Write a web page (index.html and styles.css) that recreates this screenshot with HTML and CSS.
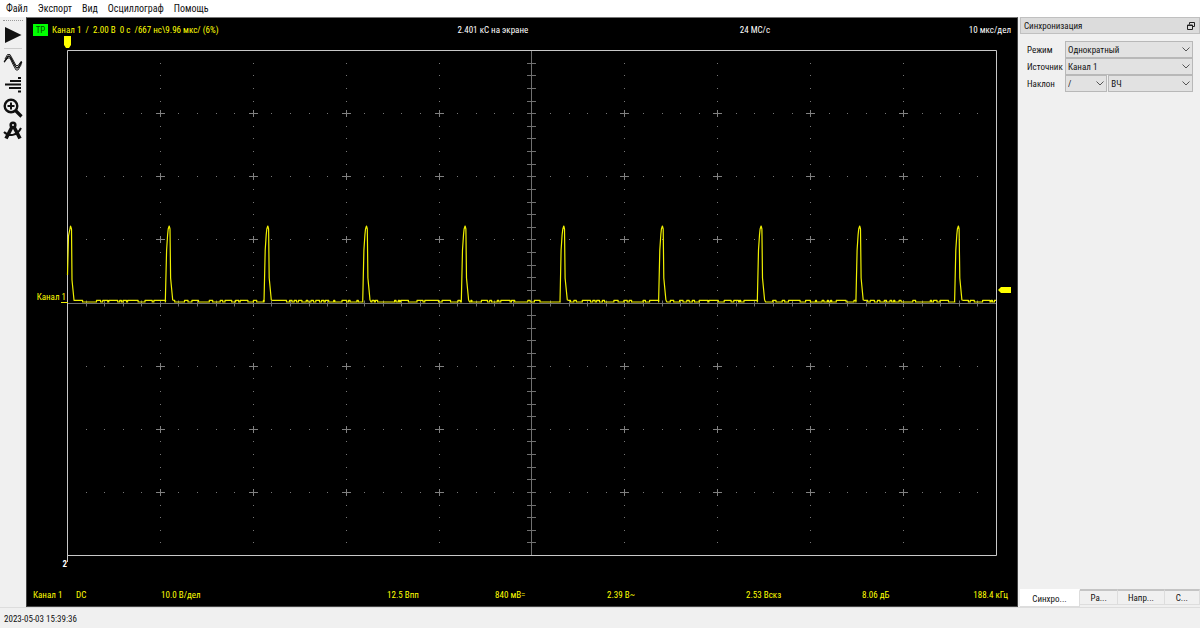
FILE: index.html
```html
<!DOCTYPE html>
<html lang="ru">
<head>
<meta charset="utf-8">
<title>Осциллограф</title>
<link rel="stylesheet" href="styles.css">
</head>
<body>
<div class="app">
  <nav class="menubar">
    <button class="menu">Файл</button>
    <button class="menu">Экспорт</button>
    <button class="menu">Вид</button>
    <button class="menu">Осциллограф</button>
    <button class="menu">Помощь</button>
  </nav>
  <div class="workspace">
    <div class="toolbar" role="toolbar" aria-label="Инструменты">
      <span class="grip"></span>
      <button class="tool tool-run" aria-label="Пуск"><svg viewBox="0 0 20 20"><path d="M2 2V18L18.500 10z"/></svg></button>
      <span class="divider"></span>
      <button class="tool" aria-label="Сигнал"><svg viewBox="0 0 20 20"><g fill="none" stroke="#111"><path d="M1 10C3 9 4 4 6 4S12 16 14 16S17 11 19 10" stroke-width="1.500"/><path d="M2 7L4.500 2.500H7L9.500 7L13 13.500H15L18.500 9M2 9L5 6H7L10 12.500L13 18H15L18 13V10" stroke-width=".9"/></g></svg></button>
      <button class="tool" aria-label="Гистограмма"><svg viewBox="0 0 20 20"><path d="M15 2h3v2h-3zM7 5h11v2H7zM2 8.500h16v2H2zM6 12h12v2H6zM15 15.500h3v2h-3z"/></svg></button>
      <button class="tool" aria-label="Масштаб"><svg viewBox="0 0 20 20"><g fill="none" stroke="#111"><circle cx="8" cy="8" r="6.300" stroke-width="2.400"/><path d="M4.500 8h7M8 4.500v7" stroke-width="2"/><path d="M12.500 12.500l6 6" stroke-width="3.200"/></g></svg></button>
      <button class="tool" aria-label="Измерения"><svg viewBox="0 0 20 20"><g fill="none" stroke="#111"><circle cx="10" cy="4" r="2.300" stroke-width="2.600"/><path d="M9 6L3 17.500M11 6l6 11.500" stroke-width="3.600"/><path d="M1 11c5 5 13 4 17-4" stroke-width="2"/></g></svg></button>
    </div>
    <main class="scope">
      <header class="scope-info">
        <div class="trigger"><span class="tag">ТР</span><span class="pre">Канал 1  /  2.00 В  0 с  /667 нс\9.96 мкс/ (6%)</span></div>
        <div>2.401 кС на экране</div>
        <div>24 МС/с</div>
        <div class="end">10 мкс/дел</div>
      </header>
      <svg class="plot" id="plot" viewBox="27 35 990 553" role="img" aria-label="Осциллограмма канала 1">
        <g id="grid"></g>
        <path id="trace" class="trace"/>
        <path class="marker" d="M64 36h7v9l-2 3h-3l-2-3z"/>
        <path class="marker" d="M1011 287v6h-10l-3-3 3-3z"/>
        <path class="zero" d="M61 302.500h7"/>
        <text class="label" x="66" y="300">Канал 1</text>
        <text class="label label-two" x="67" y="567">2</text>
      </svg>
      <footer class="measures">
        <span>Канал 1</span><span>DC</span><span>10.0 В/дел</span><span>12.5 Впп</span><span>840 мВ=</span><span>2.39 В~</span><span>2.53 Вскз</span><span>8.06 дБ</span><span class="end">188.4 кГц</span>
      </footer>
    </main>
    <aside class="dock">
      <div class="dock-title"><span>Синхронизация</span>
        <button class="float" aria-label="Открепить"><svg viewBox="0 0 8 8"><path d="M2.500 2.500v-2h5v4h-2M.5 3h5v4.500h-5zM.5 3.500h5" fill="none" stroke="#222"/></svg></button>
      </div>
      <form class="form">
        <label for="mode">Режим</label>
        <span class="select"><select id="mode"><option>Однократный</option></select><svg viewBox="0 0 8 5"><path d="M.5 .5L4 4L7.500 .5"/></svg></span>
        <label for="source">Источник</label>
        <span class="select"><select id="source"><option>Канал 1</option></select><svg viewBox="0 0 8 5"><path d="M.5 .5L4 4L7.500 .5"/></svg></span>
        <label for="slope">Наклон</label>
        <div class="pair">
          <span class="select"><select id="slope"><option>/</option></select><svg viewBox="0 0 8 5"><path d="M.5 .5L4 4L7.500 .5"/></svg></span>
          <span class="select"><select aria-label="Фильтр"><option>ВЧ</option></select><svg viewBox="0 0 8 5"><path d="M.5 .5L4 4L7.500 .5"/></svg></span>
        </div>
      </form>
      <div class="tabs" role="tablist">
        <button class="tab active" role="tab" aria-selected="true">Синхро...</button>
        <button class="tab" role="tab">Ра...</button>
        <button class="tab" role="tab">Напр...</button>
        <button class="tab" role="tab">С...</button>
      </div>
    </aside>
  </div>
  <footer class="status">2023-05-03 15:39:36</footer>
</div>
<script src="plot.js"></script>
</body>
</html>
```
FILE: styles.css
```css
* { box-sizing: border-box; }
body {
  margin: 0;
  background: #f0f0f0;
  color: #111;
  font-family: "Roboto Condensed", "Liberation Sans", Arial, sans-serif;
  font-size: 9px;
  line-height: 12px;
}
button, select { font: inherit; color: inherit; border: 0; padding: 0; margin: 0; background: none; }
.app { display: flex; flex-direction: column; min-height: 100vh; }
.menubar { display: flex; gap: 10px; height: 17px; padding: 0 6px; background: #fff; font-size: 10px; }
.workspace { display: flex; flex: 1; }
.toolbar { display: flex; flex-direction: column; align-items: center; gap: 3px; width: 26px; padding-top: 3px; }
.grip { width: 20px; border-top: 1px dotted #999; }
.divider { width: 18px; border-top: 1px solid #ccc; }
.tool { width: 20px; height: 20px; }
.tool svg { display: block; width: 20px; height: 20px; fill: #111; }
.tool-run { height: 21px; }
.scope { display: flex; flex-direction: column; flex: 1; min-width: 0; background: #000; border: 1px solid #444; border-top-color: #777; }
.scope-info { display: grid; grid-template-columns: 424fr 282fr 100fr 171fr; height: 17px; padding: 6px 6px 0 6px; color: #fff; white-space: nowrap; }
.trigger { display: flex; gap: 4px; color: #ff0; }
.tag { width: 15px; background: #0f0; color: #055000; text-align: center; }
.pre { white-space: pre; }
.end { text-align: right; }
.plot { display: block; width: 100%; flex: 1; min-height: 0; }
.frame { fill: none; stroke: #c8c8c8; }
.axis, .ticks { fill: none; stroke: #707070; }
.crosses { fill: none; stroke: #808080; }
.dots { fill: #777; }
.trace { fill: none; stroke: #f0f000; stroke-width: 1.2px; stroke-linejoin: round; }
.zero { stroke: #f0f000; }
.marker { fill: #ff0; }
.label { fill: #ff0; font-size: 9px; text-anchor: end; }
.label-two { fill: #fff; font-weight: bold; }
.measures { display: grid; grid-template-columns: 43fr 85fr 226fr 108fr 112fr 139fr 116fr 60fr 86fr; height: 18px; padding: 1px 9px 0 6px; color: #ff0; white-space: nowrap; }
.dock { display: flex; flex-direction: column; width: 182px; padding: 0 0 0 2px; }
.dock-title { display: flex; justify-content: space-between; align-items: center; height: 17px; padding: 0 4px 0 3px; background: #dcdcdc; border: 1px solid #c0c0c0; }
.float svg { display: block; width: 8px; height: 8px; }
.form { display: grid; grid-template-columns: 38px 1fr; align-items: center; padding: 7px 7px 0 7px; }
.select { position: relative; display: block; }
.select select { display: block; width: 100%; height: 17px; padding: 0 2px; appearance: none; background: #e2e2e2; border: 1px solid #b8b8b8; border-radius: 0; }
.select svg { position: absolute; right: 3px; top: 6px; width: 8px; height: 5px; pointer-events: none; fill: none; stroke: #555; }
.pair { display: grid; grid-template-columns: 1fr 2fr; gap: 1px; }
.tabs { display: flex; align-items: flex-start; margin-top: auto; height: 18px; }
.tab { height: 16px; flex: 38; border: 1px solid #ddd; border-width: 1px 1px 1px 0; border-top: 2px solid #c4c4c4; }
.tab:nth-child(3) { flex: 46; }
.tab:nth-child(4) { flex: 35; }
.tab.active { flex: 60; height: 18px; background: #fff; border-top-color: #fff; }
.status { height: 21px; padding: 5px 4px; border-top: 1px solid #ddd; }
```
FILE: plot.js
```js
const NS = 'http://www.w3.org/2000/svg';
const L = 67, T = 50, W = 929, H = 505;
const sx = W / 50, sy = H / 40;
const grid = document.getElementById('grid');
const px = i => L + Math.round(i * sx) + 0.5;
const py = j => T + Math.round(j * sy) + 0.5;

function add(cls, d) {
  const path = document.createElementNS(NS, 'path');
  path.setAttribute('class', cls);
  path.setAttribute('d', d);
  grid.appendChild(path);
}

let dots = '', crosses = '', ticks = '';
const dot = (x, y) => { dots += `M${x - 0.5} ${y - 0.5}h1v1h-1z`; };
for (let j = 5; j < 40; j += 5)
  for (let i = 1; i < 50; i++)
    if (i % 5 && j !== 20) dot(px(i), py(j));
for (let i = 5; i < 50; i += 5)
  for (let j = 1; j < 40; j++) {
    if (i === 25) continue;
    if (j % 5) dot(px(i), py(j));
    else crosses += `M${px(i) - 4.5} ${py(j)}h9M${px(i)} ${py(j) - 3.5}v7`;
  }
for (let j = 1; j < 40; j++) ticks += `M${px(25) - 4.5} ${py(j)}h9`;
for (let i = 1; i < 50; i++) ticks += `M${px(i)} ${py(20) - 3}v6`;
add('dots', dots);
add('crosses', crosses);
add('ticks', ticks);
add('axis', `M${px(25)} ${T}v${H}M${L} ${py(20)}h${W}`);
add('frame', `M${L + 0.5} ${T + 0.5}h${W}v${H}h-${W}zM${L + 0.5} ${T + H}v7`);

let seed = 7;
const random = () => (seed = seed * 16807 % 2147483647) / 2147483647;
const right = L + W;
let trace = 'M67.5 275L68.5 236L70.5 226L71.5 229L72 280L74 300';
let x = 74;
for (let n = 1; n <= 10; n++) {
  const peak = 71 + n * 98.65;
  const end = Math.min(peak - 4, right);
  while (x < end) {
    const y = random() < 0.55 ? 300.3 : 302;
    trace += `L${x.toFixed(1)} ${y}`;
    x = Math.min(x + 1 + random() * (random() < 0.25 ? 6 : 1.5), end);
    trace += `L${x.toFixed(1)} ${y}`;
  }
  if (peak < right) {
    const points = [[-3.8, 302], [-2.6, 250], [-1.6, 235], [-1, 229], [0, 226], [0.8, 229], [1.4, 278], [3.5, 300]];
    for (const [dx, y] of points) trace += `L${(peak - 0.5 + dx).toFixed(1)} ${y}`;
    x = peak + 4;
  }
}
document.getElementById('trace').setAttribute('d', trace);
```
